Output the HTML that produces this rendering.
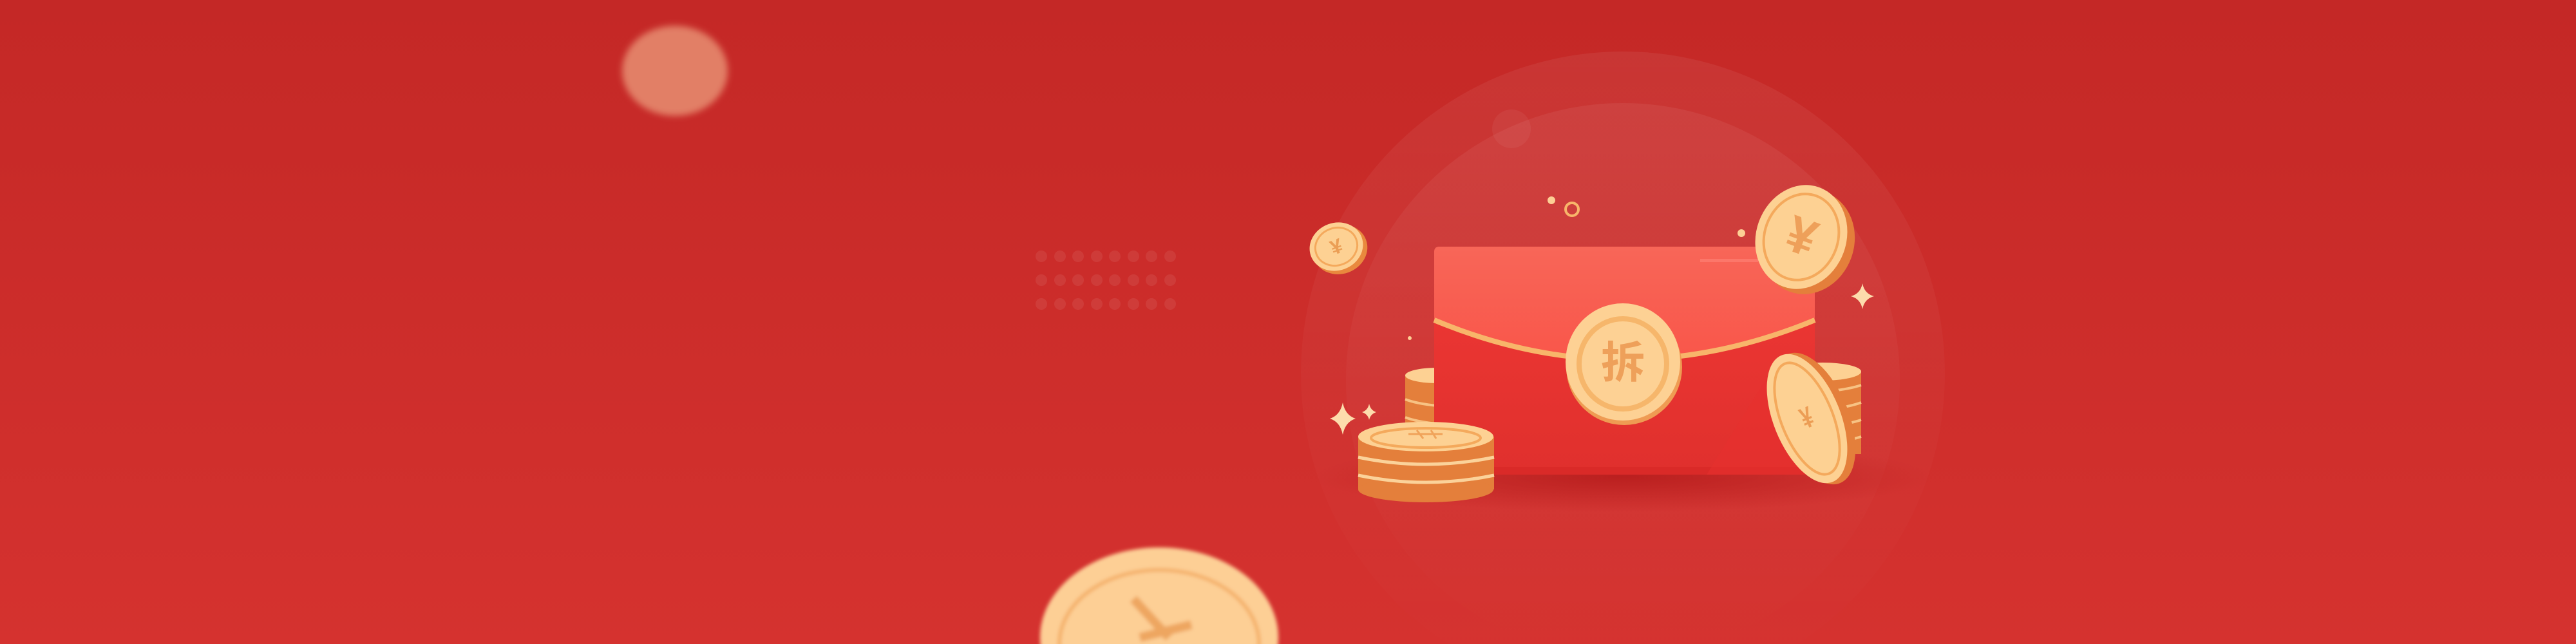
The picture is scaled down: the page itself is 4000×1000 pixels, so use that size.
<!DOCTYPE html>
<html><head><meta charset="utf-8"><style>
html,body{margin:0;padding:0;width:4000px;height:1000px;overflow:hidden;background:#c8292a}
svg{display:block}
</style></head><body>
<svg width="4000" height="1000" viewBox="0 0 4000 1000" xmlns="http://www.w3.org/2000/svg">
<defs>
<linearGradient id="bg" x1="0" y1="0" x2="0" y2="1">
<stop offset="0" stop-color="#c42826"/><stop offset="1" stop-color="#d5322f"/></linearGradient>
<linearGradient id="halo" x1="0" y1="0" x2="0" y2="1">
<stop offset="0" stop-color="#ffffff" stop-opacity="0.06"/><stop offset="0.6" stop-color="#ffffff" stop-opacity="0.02"/><stop offset="1" stop-color="#ffffff" stop-opacity="0"/></linearGradient>
<linearGradient id="flap" x1="0" y1="0" x2="0" y2="1">
<stop offset="0" stop-color="#f86658"/><stop offset="1" stop-color="#f9564a"/></linearGradient>
<linearGradient id="body" x1="0" y1="0" x2="0" y2="1">
<stop offset="0" stop-color="#ef3835"/><stop offset="1" stop-color="#e0302d"/></linearGradient>
<radialGradient id="shadow" cx="0.5" cy="0.5" r="0.5">
<stop offset="0" stop-color="#b01616" stop-opacity="0.7"/><stop offset="1" stop-color="#b01616" stop-opacity="0"/></radialGradient>
<filter id="blur"><feGaussianBlur stdDeviation="5"/></filter>
<filter id="blur2"><feGaussianBlur stdDeviation="3"/></filter>
</defs>
<rect width="4000" height="1000" fill="url(#bg)"/>
<!-- halo circles -->
<circle cx="2520" cy="580" r="500" fill="url(#halo)"/>
<circle cx="2520" cy="590" r="430" fill="url(#halo)"/>
<circle cx="2347" cy="200" r="30" fill="#ffffff" opacity="0.05"/>
<!-- dots grid -->
<g fill="#ffffff" opacity="0.07">
<g id="row"><circle cx="1617" cy="398" r="9"/><circle cx="1646" cy="398" r="9"/><circle cx="1674" cy="398" r="9"/><circle cx="1703" cy="398" r="9"/><circle cx="1731" cy="398" r="9"/><circle cx="1760" cy="398" r="9"/><circle cx="1788" cy="398" r="9"/><circle cx="1817" cy="398" r="9"/></g>
<use href="#row" y="37"/><use href="#row" y="74"/>
</g>
<!-- blurred coins -->
<g filter="url(#blur)"><ellipse cx="1048" cy="110" rx="82" ry="70" fill="#e27f66"/></g>
<g filter="url(#blur2)">
<ellipse cx="1800" cy="990" rx="185" ry="140" fill="#fdcf95"/>
<ellipse cx="1800" cy="1000" rx="155" ry="115" fill="none" stroke="#f4b06b" stroke-width="6"/>
<path d="M1760 930 L1815 990 M1770 990 L1850 970" stroke="#eea660" stroke-width="14" fill="none"/>
</g>
<!-- floor shadow -->
<ellipse cx="2520" cy="740" rx="480" ry="55" fill="url(#shadow)"/>
<!-- small decorations -->
<circle cx="2409" cy="311" r="6" fill="#fdcf95"/>
<circle cx="2441" cy="325" r="10" fill="none" stroke="#f8b56a" stroke-width="4"/>
<circle cx="2704" cy="362" r="6" fill="#fdcf95"/>
<circle cx="2189" cy="525" r="3" fill="#fdcf95"/>
<g fill="#fddcac">
<path d="M2085 625 Q2089 645 2105 650 Q2089 655 2085 675 Q2081 655 2065 650 Q2081 645 2085 625Z"/>
<path d="M2126 627 Q2128 637 2137 640 Q2128 643 2126 652 Q2124 643 2115 640 Q2124 637 2126 627Z"/>
<path d="M2892 440 Q2895 456 2910 460 Q2895 464 2892 480 Q2889 464 2874 460 Q2889 456 2892 440Z"/>
</g>
<!-- small left coin -->
<g transform="translate(2075,383) rotate(-20)">
<ellipse cx="4" cy="6" rx="43" ry="38" fill="#e9893e"/>
<ellipse cx="0" cy="0" rx="42" ry="37" fill="#fdd193"/>
<ellipse cx="0" cy="0" rx="33" ry="29" fill="none" stroke="#f4a95c" stroke-width="3"/>
<text x="0" y="11" font-size="32" text-anchor="middle" fill="#eb9e55" font-family="Liberation Sans, sans-serif" font-weight="bold">¥</text>
</g>
<!-- behind stack left -->
<rect x="2182" y="583" width="50" height="80" fill="#e47f3b"/>
<ellipse cx="2232" cy="583" rx="50" ry="12" fill="#fdd193"/>
<path d="M2182 620 Q2200 627 2232 630 M2182 648 Q2200 655 2232 658" stroke="#f7c283" stroke-width="4" fill="none"/>
<!-- right stack -->
<rect x="2790" y="575" width="100" height="130" fill="#e47f3b"/>
<ellipse cx="2830" cy="577" rx="60" ry="14" fill="#fdd193"/>
<path d="M2800 610 Q2860 608 2890 598 M2800 638 Q2860 636 2890 625 M2800 664 Q2860 662 2890 652 M2800 690 Q2860 688 2890 678" stroke="#f7c283" stroke-width="4" fill="none"/>
<!-- envelope -->
<rect x="2227" y="383" width="591" height="354" rx="8" fill="url(#body)"/>
<path d="M2227 391 Q2227 383 2235 383 L2810 383 Q2818 383 2818 391 L2818 497 Q2520 620 2227 497Z" fill="url(#flap)"/>
<path d="M2227 497 Q2520 620 2818 497" stroke="#f8b56a" stroke-width="8" fill="none"/>
<rect x="2227" y="725" width="591" height="12" fill="#d52724" opacity="0.6"/>
<path d="M2650 737 L2760 560 L2818 560 L2818 737Z" fill="#e8302e" opacity="0.5"/>
<rect x="2640" y="402" width="90" height="5" fill="#ff8a7d" opacity="0.5"/>
<!-- seal coin -->
<ellipse cx="2522" cy="570" rx="90" ry="90" fill="#ef9b53"/>
<ellipse cx="2520" cy="562" rx="89" ry="91" fill="#fdd194"/>
<ellipse cx="2520" cy="565" rx="72" ry="74" fill="#f6b66b"/>
<ellipse cx="2520" cy="565" rx="64" ry="66" fill="#fdd194"/>
<text x="2520" y="587" font-size="68" text-anchor="middle" fill="#eea05a" font-family="Liberation Sans, 'Noto Sans CJK SC', sans-serif" font-weight="bold">拆</text>
<!-- left stack -->
<rect x="2109" y="678" width="211" height="82" fill="#e47f3b"/>
<ellipse cx="2214" cy="760" rx="105" ry="20" fill="#e47f3b"/>
<path d="M2109 710 Q2214 732 2320 710 M2109 738 Q2214 760 2320 738" stroke="#fbd29a" stroke-width="5" fill="none"/>
<ellipse cx="2214" cy="678" rx="105" ry="23" fill="#fdd193"/>
<ellipse cx="2214" cy="680" rx="85" ry="15" fill="none" stroke="#f4a95c" stroke-width="4"/>
<path d="M2187 674 L2240 674 M2200 668 L2210 681 M2222 668 L2230 681" stroke="#f0a35a" stroke-width="3"/>
<!-- leaning coin -->
<g transform="translate(2806,650) rotate(-22)">
<ellipse cx="10" cy="4" rx="54" ry="108" fill="#e47f3b"/>
<ellipse cx="0" cy="0" rx="52" ry="106" fill="#fdd193"/>
<ellipse cx="0" cy="0" rx="40" ry="92" fill="none" stroke="#f4a95c" stroke-width="4"/>
<text x="0" y="14" font-size="46" text-anchor="middle" fill="#ec9d55" font-family="Liberation Sans, sans-serif" font-weight="bold" transform="scale(0.7,1)">¥</text>
</g>
<!-- top right coin -->
<g transform="translate(2797,368) rotate(20)">
<ellipse cx="12" cy="4" rx="72" ry="82" fill="#e47f3b"/>
<ellipse cx="0" cy="0" rx="70" ry="82" fill="#fdd193"/>
<ellipse cx="0" cy="0" rx="57" ry="68" fill="none" stroke="#f4a95c" stroke-width="4"/>
<text x="0" y="26" font-size="80" text-anchor="middle" fill="#eea05a" font-family="Liberation Sans, sans-serif" font-weight="bold">¥</text>
</g>
</svg>
</body></html>
